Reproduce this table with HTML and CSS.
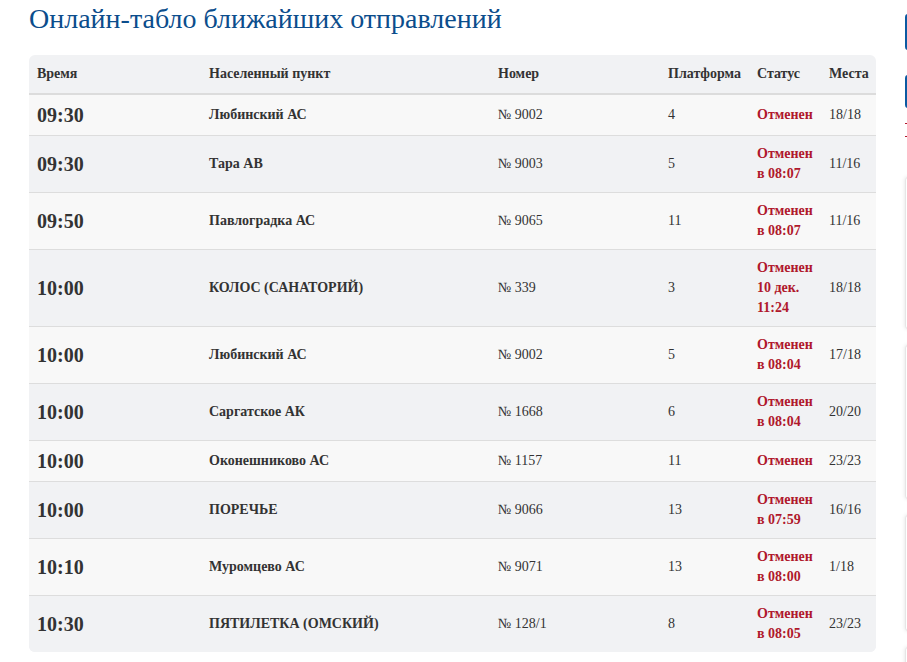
FILE: index.html
```html
<!DOCTYPE html>
<html lang="ru">
<head>
<meta charset="utf-8">
<title>Онлайн-табло</title>
<link rel="stylesheet" href="styles.css">
</head>
<body>
<div class="page">
  <main class="main">
    <h1 class="title">Онлайн-табло ближайших отправлений</h1>
    <div class="board">
      <table class="table">
        <colgroup>
          <col class="c-time"><col class="c-place"><col class="c-num"><col class="c-plat"><col class="c-status"><col class="c-seats">
        </colgroup>
        <thead>
          <tr><th>Время</th><th>Населенный пункт</th><th>Номер</th><th>Платформа</th><th>Статус</th><th>Места</th></tr>
        </thead>
        <tbody>
          <tr><td class="time">09:30</td><td class="place">Любинский АС</td><td>№ 9002</td><td>4</td><td class="status">Отменен</td><td>18/18</td></tr>
          <tr><td class="time">09:30</td><td class="place">Тара АВ</td><td>№ 9003</td><td>5</td><td class="status">Отменен в 08:07</td><td>11/16</td></tr>
          <tr><td class="time">09:50</td><td class="place">Павлоградка АС</td><td>№ 9065</td><td>11</td><td class="status">Отменен в 08:07</td><td>11/16</td></tr>
          <tr><td class="time">10:00</td><td class="place">КОЛОС (САНАТОРИЙ)</td><td>№ 339</td><td>3</td><td class="status">Отменен 10 дек. 11:24</td><td>18/18</td></tr>
          <tr><td class="time">10:00</td><td class="place">Любинский АС</td><td>№ 9002</td><td>5</td><td class="status">Отменен в 08:04</td><td>17/18</td></tr>
          <tr><td class="time">10:00</td><td class="place">Саргатское АК</td><td>№ 1668</td><td>6</td><td class="status">Отменен в 08:04</td><td>20/20</td></tr>
          <tr><td class="time">10:00</td><td class="place">Оконешниково АС</td><td>№ 1157</td><td>11</td><td class="status">Отменен</td><td>23/23</td></tr>
          <tr><td class="time">10:00</td><td class="place">ПОРЕЧЬЕ</td><td>№ 9066</td><td>13</td><td class="status">Отменен в 07:59</td><td>16/16</td></tr>
          <tr><td class="time">10:10</td><td class="place">Муромцево АС</td><td>№ 9071</td><td>13</td><td class="status">Отменен в 08:00</td><td>1/18</td></tr>
          <tr><td class="time">10:30</td><td class="place">ПЯТИЛЕТКА (ОМСКИЙ)</td><td>№ 128/1</td><td>8</td><td class="status">Отменен в 08:05</td><td>23/23</td></tr>
        </tbody>
      </table>
    </div>
  </main>
  <aside class="side">
    <div class="btn btn-1"></div>
    <div class="btn btn-2"></div>
    <div class="redline redline-1"></div>
    <div class="redline"></div>
    <div class="card card-1"></div>
    <div class="card card-2"></div>
    <div class="card card-3"></div>
    <div class="card card-4"></div>
  </aside>
</div>
</body>
</html>
```

FILE: styles.css
```css
html, body {
  margin: 0;
  padding: 0;
  background: #ffffff;
  overflow: hidden;
}
body {
  font-family: "Liberation Serif", "Times New Roman", serif;
  color: #333333;
  width: 907px;
  height: 662px;
}
.page {
  display: flex;
  align-items: flex-start;
  padding-left: 29px;
  gap: 29px;
  width: 1200px;
}
.main {
  width: 847px;
  flex: none;
}
.title {
  margin: 3px 0 0 0;
  font-weight: normal;
  font-size: 28px;
  line-height: 32px;
  color: #0b4d8c;
}
.board {
  margin-top: 20px;
  background: #f1f2f4;
  border-radius: 6px;
  overflow: hidden;
}
.table {
  width: 847px;
  border-collapse: collapse;
  table-layout: fixed;
  font-size: 14px;
}
.c-time { width: 172px; }
.c-place { width: 289px; }
.c-num { width: 170px; }
.c-plat { width: 89px; }
.c-status { width: 72px; }
.c-seats { width: 55px; }
th {
  text-align: left;
  font-weight: bold;
  font-size: 14px;
  line-height: 20px;
  padding: 9px 8px 9px 8px;
  color: #333;
  border-bottom: 2px solid #dcdcdc;
  white-space: nowrap;
}
td {
  padding: 8px;
  line-height: 20px;
  vertical-align: middle;
  border-top: 1px solid #dddddd;
  color: #333;
}
tbody tr:first-child td { border-top: none; }
tbody tr:nth-child(odd) { background: #f8f8f8; }
tbody tr:nth-child(even) { background: #f1f2f4; }
.time {
  font-size: 20px;
  font-weight: bold;
  line-height: 24px;
}
.place {
  font-weight: bold;
}
.status {
  font-weight: bold;
  color: #b0182c;
  font-size: 14px;
}
.side {
  flex: none;
  width: 260px;
  display: flex;
  flex-direction: column;
  padding-top: 14px;
}
.btn {
  height: 36px;
  background: #0b5aa2;
  border-radius: 3px;
}
.btn-2 {
  margin-top: 25px;
  height: 33px;
}
.redline {
  width: 6px;
  height: 1px;
  background: #b0182c;
  margin-top: 12px;
}
.redline-1 { margin-top: 15px; }
.card {
  border: 1px solid #e6e6e6;
  box-shadow: 0 0 4px rgba(0,0,0,0.12);
  border-radius: 3px;
  background: #fff;
  margin-top: 16px;
}
.card-1 { height: 150px; margin-top: 40px; }
.card-2 { height: 152px; }
.card-3 { height: 114px; }
.card-4 { height: 60px; }
```
